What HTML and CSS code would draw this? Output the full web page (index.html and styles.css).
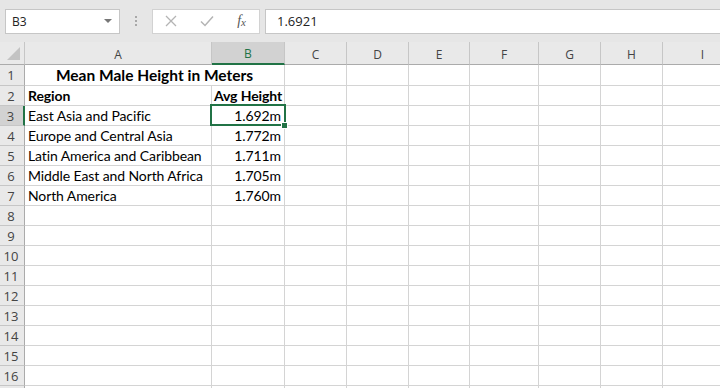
FILE: index.html
```html
<!DOCTYPE html>
<html lang="en">
<head>
    <meta charset="UTF-8">
    <meta name="viewport" content="width=device-width, initial-scale=1.0">
    <title>Mean Male Height</title>
    <link rel="stylesheet" href="styles.css">
</head>
<body>

<!-- Formula bar -->
<div class="toolbar">
    <div class="name-box">
        <span>B3</span>
        <svg class="caret" width="8" height="4" viewBox="0 0 8 4"><path d="M0 0h8L4 4z" fill="#777"/></svg>
    </div>
    <div class="grip">
        <span></span><span></span><span></span>
    </div>
    <div class="fx-buttons">
        <svg width="12" height="12" viewBox="0 0 12 12"><path d="M1 1l10 10M11 1L1 11" stroke="#b4b4b4" stroke-width="1.3" fill="none"/></svg>
        <svg width="14" height="12" viewBox="0 0 14 12"><path d="M1 6.5l4 4L13 1.5" stroke="#b4b4b4" stroke-width="1.5" fill="none"/></svg>
        <span class="fx">f<sub>x</sub></span>
    </div>
    <div class="formula">1.6921</div>
</div>

<!-- Sheet -->
<div class="sheet-wrap">
    <div class="sheet">
        <div class="corner"><span class="tri"></span></div>
        <div class="col-head">A</div>
        <div class="col-head active">B</div>
        <div class="col-head">C</div>
        <div class="col-head">D</div>
        <div class="col-head">E</div>
        <div class="col-head">F</div>
        <div class="col-head">G</div>
        <div class="col-head">H</div>
        <div class="col-head">I</div>

        <div class="row-head">1</div>
        <div class="cell title">Mean Male Height in Meters</div>
        <div class="cell"></div><div class="cell"></div><div class="cell"></div><div class="cell"></div><div class="cell"></div><div class="cell"></div><div class="cell"></div>

        <div class="row-head">2</div>
        <div class="cell bold">Region</div>
        <div class="cell bold center">Avg Height</div>
        <div class="cell"></div><div class="cell"></div><div class="cell"></div><div class="cell"></div><div class="cell"></div><div class="cell"></div><div class="cell"></div>

        <div class="row-head active">3</div>
        <div class="cell">East Asia and Pacific</div>
        <div class="cell num selected">1.692m</div>
        <div class="cell"></div><div class="cell"></div><div class="cell"></div><div class="cell"></div><div class="cell"></div><div class="cell"></div><div class="cell"></div>

        <div class="row-head">4</div>
        <div class="cell">Europe and Central Asia</div>
        <div class="cell num">1.772m</div>
        <div class="cell"></div><div class="cell"></div><div class="cell"></div><div class="cell"></div><div class="cell"></div><div class="cell"></div><div class="cell"></div>

        <div class="row-head">5</div>
        <div class="cell">Latin America and Caribbean</div>
        <div class="cell num">1.711m</div>
        <div class="cell"></div><div class="cell"></div><div class="cell"></div><div class="cell"></div><div class="cell"></div><div class="cell"></div><div class="cell"></div>

        <div class="row-head">6</div>
        <div class="cell">Middle East and North Africa</div>
        <div class="cell num">1.705m</div>
        <div class="cell"></div><div class="cell"></div><div class="cell"></div><div class="cell"></div><div class="cell"></div><div class="cell"></div><div class="cell"></div>

        <div class="row-head">7</div>
        <div class="cell">North America</div>
        <div class="cell num">1.760m</div>
        <div class="cell"></div><div class="cell"></div><div class="cell"></div><div class="cell"></div><div class="cell"></div><div class="cell"></div><div class="cell"></div>

        <div class="row-head">8</div>
        <div class="cell"></div><div class="cell"></div><div class="cell"></div><div class="cell"></div><div class="cell"></div><div class="cell"></div><div class="cell"></div><div class="cell"></div><div class="cell"></div>
        <div class="row-head">9</div>
        <div class="cell"></div><div class="cell"></div><div class="cell"></div><div class="cell"></div><div class="cell"></div><div class="cell"></div><div class="cell"></div><div class="cell"></div><div class="cell"></div>
        <div class="row-head">10</div>
        <div class="cell"></div><div class="cell"></div><div class="cell"></div><div class="cell"></div><div class="cell"></div><div class="cell"></div><div class="cell"></div><div class="cell"></div><div class="cell"></div>
        <div class="row-head">11</div>
        <div class="cell"></div><div class="cell"></div><div class="cell"></div><div class="cell"></div><div class="cell"></div><div class="cell"></div><div class="cell"></div><div class="cell"></div><div class="cell"></div>
        <div class="row-head">12</div>
        <div class="cell"></div><div class="cell"></div><div class="cell"></div><div class="cell"></div><div class="cell"></div><div class="cell"></div><div class="cell"></div><div class="cell"></div><div class="cell"></div>
        <div class="row-head">13</div>
        <div class="cell"></div><div class="cell"></div><div class="cell"></div><div class="cell"></div><div class="cell"></div><div class="cell"></div><div class="cell"></div><div class="cell"></div><div class="cell"></div>
        <div class="row-head">14</div>
        <div class="cell"></div><div class="cell"></div><div class="cell"></div><div class="cell"></div><div class="cell"></div><div class="cell"></div><div class="cell"></div><div class="cell"></div><div class="cell"></div>
        <div class="row-head">15</div>
        <div class="cell"></div><div class="cell"></div><div class="cell"></div><div class="cell"></div><div class="cell"></div><div class="cell"></div><div class="cell"></div><div class="cell"></div><div class="cell"></div>
        <div class="row-head">16</div>
        <div class="cell"></div><div class="cell"></div><div class="cell"></div><div class="cell"></div><div class="cell"></div><div class="cell"></div><div class="cell"></div><div class="cell"></div><div class="cell"></div>
        <div class="row-head"></div>
        <div class="cell"></div><div class="cell"></div><div class="cell"></div><div class="cell"></div><div class="cell"></div><div class="cell"></div><div class="cell"></div><div class="cell"></div><div class="cell"></div>
    </div>
</div>

</body>
</html>
```

FILE: styles.css
```css
body {
    margin: 0;
    padding: 0;
    width: 720px;
    height: 388px;
    overflow: hidden;
    background-color: #fff;
    font-family: Lato, "Liberation Sans", sans-serif;
}

/* formula bar */
.toolbar {
    display: flex;
    align-items: center;
    height: 42px;
    padding-left: 5px;
    background-color: #e6e6e6;
    box-sizing: border-box;
    font-family: "Open Sans", sans-serif;
    font-size: 12px;
    color: #222;
}
.name-box {
    display: flex;
    align-items: center;
    justify-content: space-between;
    width: 115px;
    height: 25px;
    padding: 0 7px 0 6px;
    box-sizing: border-box;
    background-color: #fff;
    border: 1px solid #c6c6c6;
}
.grip {
    display: flex;
    flex-direction: column;
    gap: 2px;
    width: 32px;
    align-items: center;
}
.grip span {
    width: 2px;
    height: 2px;
    background-color: #a8a8a8;
}
.fx-buttons {
    display: flex;
    align-items: center;
    justify-content: space-between;
    width: 108px;
    height: 25px;
    padding: 0 13px 0 12px;
    box-sizing: border-box;
    background-color: #fff;
    border: 1px solid #d2d2d2;
}
.fx {
    font-family: "Liberation Serif", serif;
    font-style: italic;
    font-size: 14px;
    color: #555;
}
.fx sub {
    font-size: 11px;
    vertical-align: -1px;
}
.formula {
    flex: 1;
    height: 25px;
    margin-left: 5px;
    padding-left: 11px;
    line-height: 23px;
    box-sizing: border-box;
    background-color: #fff;
    border-top: 1px solid #c6c6c6;
    border-bottom: 1px solid #c6c6c6;
    border-left: 1px solid #c6c6c6;
    font-size: 13px;
}

/* grid */
.sheet-wrap {
    width: 720px;
    overflow: hidden;
}
.sheet {
    display: grid;
    grid-template-columns: 25px 187px 73px 62px 62px 61px 69px 62px 62px 80px;
    grid-template-rows: 23px 21px;
    grid-auto-rows: 20px;
    width: 743px;
}
.corner,
.col-head,
.row-head {
    background-color: #e9e9e9;
    color: #444;
    font-family: "Open Sans", sans-serif;
    font-size: 12px;
    box-sizing: border-box;
}
.corner {
    position: relative;
    border-right: 1px solid #c6c6c6;
    border-bottom: 1px solid #ababab;
}
.tri {
    position: absolute;
    right: 4px;
    bottom: 4px;
    width: 0;
    height: 0;
    border-left: 13px solid transparent;
    border-bottom: 13px solid #c3c3c3;
}
.col-head {
    display: flex;
    align-items: center;
    justify-content: center;
    padding-top: 2px;
    border-right: 1px solid #c6c6c6;
    border-bottom: 1px solid #ababab;
}
.col-head.active {
    background-color: #d2d2d2;
    color: #217346;
    border-bottom: 2px solid #217346;
}
.row-head {
    display: flex;
    align-items: center;
    justify-content: center;
    padding-right: 2px;
    border-right: 1px solid #ababab;
    border-bottom: 1px solid #c6c6c6;
    font-size: 13px;
}
.row-head.active {
    background-color: #d2d2d2;
    border-right: 2px solid #217346;
}
.cell {
    position: relative;
    padding: 0 3px;
    box-sizing: border-box;
    border-right: 1px solid #d4d4d4;
    border-bottom: 1px solid #d4d4d4;
    font-size: 14px;
    line-height: 20px;
    letter-spacing: -0.1px;
    color: #000;
    white-space: nowrap;
}
.title {
    grid-column: span 2;
    text-align: center;
    font-weight: bold;
    font-size: 15.5px;
    letter-spacing: 0;
}
.bold {
    font-weight: bold;
}
.center {
    text-align: center;
    padding: 0;
}
.num {
    text-align: right;
}
.selected::after {
    content: "";
    position: absolute;
    top: -2px;
    left: -2px;
    right: -2px;
    bottom: -1px;
    border: 2px solid #217346;
}
.selected::before {
    content: "";
    position: absolute;
    right: -4px;
    bottom: -4px;
    width: 5px;
    height: 5px;
    background-color: #217346;
    border: 1px solid #fff;
    z-index: 2;
}
```
